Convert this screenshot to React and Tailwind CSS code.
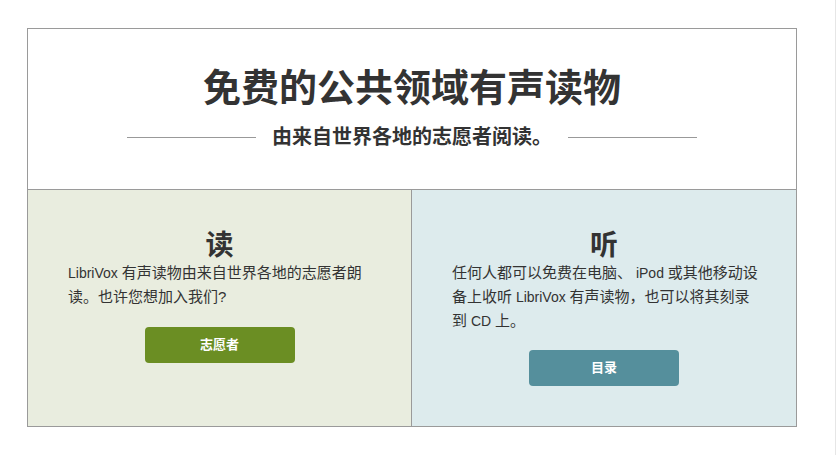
import React from "react";

const cjk = {
  fontFamily: '"Liberation Sans", "Noto Sans CJK SC", sans-serif',
};

const Latin = ({ children }) => (
  <span className="text-[14px]">{children}</span>
);

const Panel = ({ title, bg, btnBg, btnLabel, btnMt, pr, children, border }) => (
  <div className={`${bg} ${border} flex flex-col items-center pt-[41px] pb-[40px]`}>
    <h2 className="text-[28px] leading-[30px] font-bold text-[#333]">{title}</h2>
    <p className={`w-full pl-10 ${pr} text-[15px] leading-6 text-[#333]`}>{children}</p>
    <a
      href="#"
      className={`${btnBg} ${btnMt} w-[150px] h-9 rounded flex items-center justify-center text-white text-[13px] font-bold`}
    >
      {btnLabel}
    </a>
  </div>
);

export default function App() {
  return (
    <div className="w-[836px] min-h-[455px] bg-white border-r border-[#e6e6e6]" style={cjk}>
      <div className="pt-[28px] pl-[27px]">
        <div className="w-[770px] border border-[#9a9a9a]">
          {/* Header */}
          <div className="flex flex-col items-center pt-[36px] pb-[39px] border-b border-[#9a9a9a]">
            <h1 className="text-[38px] leading-[46px] font-bold text-[#333]">免费的公共领域有声读物</h1>
            <div className="mt-[13px] flex items-center gap-4">
              <span className="w-[129px] h-px bg-[#999]"></span>
              <p className="text-[20px] leading-[26px] font-bold text-[#333]">由来自世界各地的志愿者阅读。</p>
              <span className="w-[129px] h-px bg-[#999]"></span>
            </div>
          </div>

          {/* Columns */}
          <div className="grid grid-cols-2">
            <Panel
              title="读"
              bg="bg-[#e9eddf]"
              border="border-r border-[#9a9a9a]"
              btnBg="bg-[#6b8e23]"
              btnLabel="志愿者"
              btnMt="mt-[18px]"
              pr="pr-10"
            >
              <Latin>LibriVox </Latin>有声读物由来自世界各地的志愿者朗读。也许您想加入我们?
            </Panel>
            <Panel
              title="听"
              bg="bg-[#ddebed]"
              border=""
              btnBg="bg-[#558f9c]"
              btnLabel="目录"
              btnMt="mt-[17px]"
              pr="pr-[36px]"
            >
              任何人都可以免费在电脑、<Latin> iPod </Latin>或其他移动设备上收听<Latin> LibriVox </Latin>有声读物，也可以将其刻录到<Latin> CD </Latin>上。
            </Panel>
          </div>
        </div>
      </div>
    </div>
  );
}
